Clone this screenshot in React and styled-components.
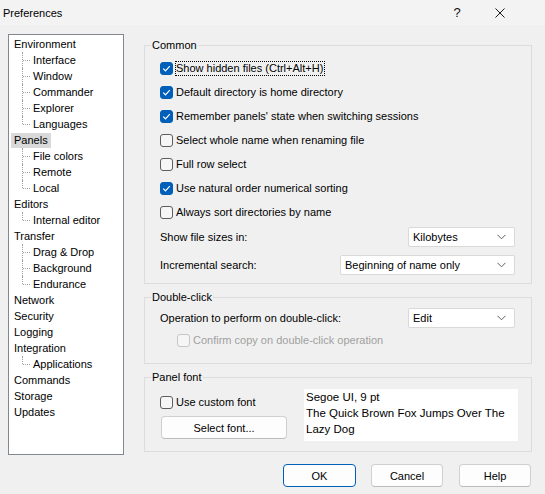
import React from 'react'
import styled, { createGlobalStyle } from 'styled-components'

const Global = createGlobalStyle`
  html, body { margin: 0; padding: 0; }
  body {
    background: #f0f0f0;
    font-family: 'Liberation Sans', Arial, sans-serif;
    font-size: 11px;
    color: #000;
  }
`

const Window = styled.div`
  width: 545px;
  height: 494px;
  background: #f0f0f0;
  display: flex;
  flex-direction: column;
  overflow: hidden;
`

const TitleBar = styled.div`
  height: 25px;
  flex: none;
  background: #f3f3f3;
  display: flex;
  align-items: center;
  padding: 0 22px 0 3px;
  font-size: 11px;
  .title {
    flex: 1;
    margin-top: 1px;
  }
`

const TitleButton = styled.div`
  width: ${p => p.$width}px;
  height: 25px;
  display: flex;
  align-items: center;
  justify-content: center;
  font-size: 13px;
  color: #111;
`

const Main = styled.div`
  display: flex;
  gap: 20px;
  padding: 9px 13px 0 8px;
  height: 421px;
  flex: none;
`

const Tree = styled.div`
  width: 114px;
  flex: none;
  background: #fff;
  border: 1px solid #828790;
  padding-top: 1px;
  box-sizing: content-box;
  height: 418px;
`

const TreeRow = styled.div`
  height: 16px;
  line-height: 16px;
  position: relative;
  padding-left: ${p => (p.$child ? 21 : 2)}px;
  white-space: nowrap;

  ${p => p.$child && `
    &::before {
      content: '';
      position: absolute;
      left: 13px;
      top: 0;
      height: ${p.$last ? 8 : 16}px;
      border-left: 1px dotted #a0a0a0;
    }
    &::after {
      content: '';
      position: absolute;
      left: 14px;
      top: 8px;
      width: 7px;
      border-top: 1px dotted #a0a0a0;
    }
  `}
`

const TreeLabel = styled.span`
  display: inline-block;
  padding: 0 3px;
  height: 15px;
  line-height: 15px;
  margin-top: 1px;
  vertical-align: top;
  background: ${p => (p.$selected ? '#d9d9d9' : 'transparent')};
`

const Column = styled.div`
  width: 388px;
  padding-top: 3px;
  display: flex;
  flex-direction: column;
  gap: 5px;
`

const Group = styled.fieldset`
  margin: 0;
  border: 1px solid #dcdcdc;
  padding: ${p => p.$pad || '3px 16px 8px 15px'};
  min-width: 0;
  box-sizing: border-box;
  height: ${p => p.$height}px;
  legend {
    padding: 0 1px;
    margin-left: -9px;
    line-height: 16px;
    height: 16px;
  }
`

const CheckRow = styled.label`
  display: flex;
  align-items: center;
  height: 24px;
  padding-left: ${p => p.$indent || 0}px;
  color: ${p => (p.$disabled ? '#a0a0a0' : '#000')};
`

const Box = styled.span`
  width: 13px;
  height: 13px;
  box-sizing: border-box;
  border-radius: 3px;
  flex: none;
  margin-right: 3px;
  display: flex;
  align-items: center;
  justify-content: center;
  background: ${p => (p.$checked ? '#005fb8' : '#f6f6f6')};
  border: 1px solid ${p => (p.$checked ? '#005fb8' : p.$disabled ? '#c5c5c5' : '#5d5d5d')};
`

const Focus = styled.span`
  outline: 1px dotted #000;
  outline-offset: 0;
  padding: 0 1px 1px 0;
`

const FieldRow = styled.div`
  display: flex;
  align-items: center;
  justify-content: space-between;
  height: 20px;
  margin-top: ${p => p.$mt || 0}px;
`

const Select = styled.div`
  width: ${p => p.$width}px;
  height: 20px;
  box-sizing: border-box;
  background: #fff;
  border: 1px solid #d9d9d9;
  border-radius: 2px;
  display: flex;
  align-items: center;
  padding: 0 8px 0 4px;
  span { flex: 1; }
`

const FontRow = styled.div`
  display: flex;
  justify-content: space-between;
`

const FontLeft = styled.div`
  display: flex;
  flex-direction: column;
  padding-top: 1px;
`

const Button = styled.button`
  font: inherit;
  color: #000;
  width: ${p => p.$width || 72}px;
  height: 23px;
  margin-left: ${p => p.$ml || 0}px;
  margin-top: ${p => p.$mt || 0}px;
  padding: 0;
  background: #fdfdfd;
  border: 1px solid ${p => (p.$primary ? '#005fb8' : '#d0d0d0')};
  border-bottom-color: ${p => (p.$primary ? '#005fb8' : '#bcbcbc')};
  box-shadow: ${p => (p.$primary ? 'inset 0 0 0 1px #fdfdfd' : 'none')};
  border-radius: 4px;
`

const Preview = styled.div`
  width: 214px;
  height: 52px;
  margin-right: -2px;
  background: #fff;
  padding: 0 2px;
  box-sizing: border-box;
  line-height: 16px;
  font-size: 11.5px;
`

const Footer = styled.div`
  display: flex;
  justify-content: flex-end;
  gap: 15px;
  padding: 9px 14px 0 0;
`

const Check = () => (
  <svg width="9" height="9" viewBox="0 0 9 9">
    <path d="M1.2 4.6 L3.5 6.8 L7.8 2.2" fill="none" stroke="#fff" strokeWidth="1.2" />
  </svg>
)

const Chevron = () => (
  <svg width="9" height="6" viewBox="0 0 9 6">
    <path d="M0.5 0.8 L4.5 4.8 L8.5 0.8" fill="none" stroke="#5f5f5f" strokeWidth="1" />
  </svg>
)

const Close = () => (
  <svg width="10" height="10" viewBox="0 0 10 10">
    <path d="M0.5 0.5 L9.5 9.5 M9.5 0.5 L0.5 9.5" stroke="#1a1a1a" strokeWidth="1" />
  </svg>
)

const tree = [
  ['Environment', ['Interface', 'Window', 'Commander', 'Explorer', 'Languages']],
  ['Panels', ['File colors', 'Remote', 'Local']],
  ['Editors', ['Internal editor']],
  ['Transfer', ['Drag & Drop', 'Background', 'Endurance']],
  ['Network', []],
  ['Security', []],
  ['Logging', []],
  ['Integration', ['Applications']],
  ['Commands', []],
  ['Storage', []],
  ['Updates', []],
]

const common = [
  ['Show hidden files (Ctrl+Alt+H)', true, true],
  ['Default directory is home directory', true],
  ["Remember panels' state when switching sessions", true],
  ['Select whole name when renaming file', false],
  ['Full row select', false],
  ['Use natural order numerical sorting', true],
  ['Always sort directories by name', false],
]

function CheckBox({ label, checked, focused, disabled, indent }) {
  return (
    <CheckRow $indent={indent} $disabled={disabled}>
      <Box $checked={checked} $disabled={disabled}>{checked && <Check />}</Box>
      {focused ? <Focus>{label}</Focus> : label}
    </CheckRow>
  )
}

export default function App() {
  return (
    <Window>
      <Global />
      <TitleBar>
        <span className="title">Preferences</span>
        <TitleButton $width={40}>?</TitleButton>
        <TitleButton $width={46}><Close /></TitleButton>
      </TitleBar>
      <Main>
        <Tree>
          {tree.map(([name, kids]) => (
            <React.Fragment key={name}>
              <TreeRow><TreeLabel $selected={name === 'Panels'}>{name}</TreeLabel></TreeRow>
              {kids.map((k, i) => (
                <TreeRow key={k} $child $last={i === kids.length - 1}>
                  <TreeLabel>{k}</TreeLabel>
                </TreeRow>
              ))}
            </React.Fragment>
          ))}
        </Tree>
        <Column>
          <Group $height={247}>
            <legend>Common</legend>
            {common.map(([label, checked, focused]) => (
              <CheckBox key={label} label={label} checked={checked} focused={focused} />
            ))}
            <FieldRow $mt={3}>
              <span>Show file sizes in:</span>
              <Select $width={107}><span>Kilobytes</span><Chevron /></Select>
            </FieldRow>
            <FieldRow $mt={8}>
              <span>Incremental search:</span>
              <Select $width={175}><span>Beginning of name only</span><Chevron /></Select>
            </FieldRow>
          </Group>
          <Group $height={75}>
            <legend>Double-click</legend>
            <FieldRow>
              <span>Operation to perform on double-click:</span>
              <Select $width={107}><span>Edit</span><Chevron /></Select>
            </FieldRow>
            <CheckBox label="Confirm copy on double-click operation" disabled indent={17} />
          </Group>
          <Group $height={83} $pad="4px 15px 10px 15px">
            <legend>Panel font</legend>
            <FontRow>
              <FontLeft>
                <CheckBox label="Use custom font" />
                <Button $width={126} $ml={1} $mt={2}>Select font...</Button>
              </FontLeft>
              <Preview>
                Segoe UI, 9 pt<br />
                The Quick Brown Fox Jumps Over The Lazy Dog
              </Preview>
            </FontRow>
          </Group>
        </Column>
      </Main>
      <Footer>
        <Button $primary $width={73}>OK</Button>
        <Button>Cancel</Button>
        <Button $ml={1}>Help</Button>
      </Footer>
    </Window>
  )
}
